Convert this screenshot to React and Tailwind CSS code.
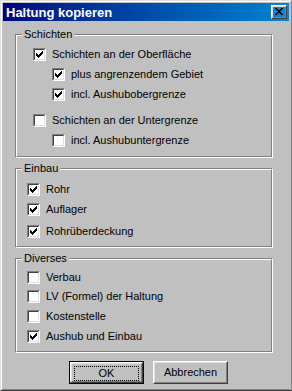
import React from "react";

const CHECK =
  "M1 3h1v3H1z M2 4h1v3H2z M3 5h1v3H3z M4 4h1v3H4z M5 3h1v3H5z M6 2h1v3H6z M7 1h1v3H7z";

const CLOSE_X =
  "M0 0h2v1H0z M6 0h2v1H6z M1 1h2v1H1z M5 1h2v1H5z M2 2h4v1H2z M3 3h2v1H3z M2 4h4v1H2z M1 5h2v1H1z M5 5h2v1H5z M0 6h2v1H0z M6 6h2v1H6z";

const CheckBox = ({ checked }) => (
  <div className="size-[13px] shrink-0 border border-t-[#808080] border-l-[#808080] border-b-white border-r-white">
    <div className="size-full border border-t-[#404040] border-l-[#404040] border-b-[#dfdfdf] border-r-[#dfdfdf] bg-white">
      {checked && (
        <svg width="9" height="9" viewBox="0 0 9 9" shapeRendering="crispEdges" className="block">
          <path d={CHECK} fill="#000" />
        </svg>
      )}
    </div>
  </div>
);

const Row = ({ checked, label, className }) => (
  <div className={"flex items-center gap-[6px] " + className}>
    <CheckBox checked={checked} />
    <span className="leading-[13px]">{label}</span>
  </div>
);

const Group = ({ label, className, children }) => (
  <div className={"relative border border-t-[#808080] border-l-[#808080] border-b-white border-r-white " + className}>
    <div className="h-full border border-t-white border-l-white border-b-[#808080] border-r-[#808080]">
      {children}
    </div>
    <span className="absolute left-[6px] top-[-7px] bg-[#c0c0c0] px-[2px] leading-[13px]">{label}</span>
  </div>
);

const Bevel = ({ children, className }) => (
  <div className={"border border-t-white border-l-white border-b-[#404040] border-r-[#404040] " + className}>
    <div className="size-full border border-t-[#dfdfdf] border-l-[#dfdfdf] border-b-[#808080] border-r-[#808080]">
      {children}
    </div>
  </div>
);

export default function App() {
  return (
    <div
      className="h-[391px] w-[292px] overflow-hidden bg-[#c0c0c0] text-[11px] text-black"
      style={{ fontFamily: '"Liberation Sans", Arial, sans-serif' }}
    >
      <div className="h-full border border-t-[#dfdfdf] border-l-[#dfdfdf] border-r-[#808080] border-b-[#404040]">
        <div className="h-full border border-t-white border-l-white border-r-[#c0c0c0] border-b-[#808080] p-px">
          {/* title bar */}
          <div className="flex h-[18px] items-center justify-between bg-gradient-to-r from-[#000080] to-[#1084d0] pl-[3px] pr-[2px]">
            <span className="text-[13px] font-bold leading-none text-white">Haltung kopieren</span>
            <Bevel className="h-[14px] w-[16px]">
              <div className="pl-[2px] pt-px">
                <svg width="8" height="7" viewBox="0 0 8 7" shapeRendering="crispEdges" className="block">
                  <path d={CLOSE_X} fill="#000" />
                </svg>
              </div>
            </Bevel>
          </div>

          <div className="pl-[12px] pt-[13px]">
            <Group label="Schichten" className="h-[124px] w-[258px]">
              <div className="flex flex-col pl-[16px] pt-[9px]">
                <Row checked label="Schichten an der Oberfläche" className="h-[19px]" />
                <Row checked label="plus angrenzendem Gebiet" className="ml-[19px] h-[20px] gap-[5px]" />
                <Row checked label="incl. Aushubobergrenze" className="ml-[19px] h-[20px] gap-[5px]" />
                <Row label="Schichten an der Untergrenze" className="mt-[6px] h-[20px]" />
                <Row label="incl. Aushubuntergrenze" className="ml-[19px] h-[20px] gap-[5px]" />
              </div>
            </Group>

            <Group label="Einbau" className="mt-[10px] h-[80px] w-[258px]">
              <div className="flex flex-col pl-[10px] pt-[10px]">
                <Row checked label="Rohr" className="h-[19px] gap-[5px]" />
                <Row checked label="Auflager" className="h-[20px] gap-[5px]" />
                <Row checked label="Rohrüberdeckung" className="mt-[2px] h-[20px] gap-[5px]" />
              </div>
            </Group>

            <Group label="Diverses" className="mt-[10px] h-[95px] w-[258px]">
              <div className="flex flex-col pl-[10px] pt-[7px]">
                <Row label="Verbau" className="h-[20px] gap-[5px]" />
                <Row label="LV (Formel) der Haltung" className="h-[19px] gap-[5px]" />
                <Row label="Kostenstelle" className="h-[20px] gap-[5px]" />
                <Row checked label="Aushub und Einbau" className="h-[20px] gap-[5px]" />
              </div>
            </Group>

            <div className="mt-[8px] flex gap-[9px] pl-[54px]">
              <div className="h-[23px] w-[75px] border border-black">
                <Bevel className="size-full">
                  <div className="m-[2px] flex h-[15px] items-center justify-center border border-dotted border-black leading-none">
                    OK
                  </div>
                </Bevel>
              </div>
              <Bevel className="h-[23px] w-[75px]">
                <div className="flex size-full items-center justify-center leading-none">Abbrechen</div>
              </Bevel>
            </div>
          </div>
        </div>
      </div>
    </div>
  );
}
